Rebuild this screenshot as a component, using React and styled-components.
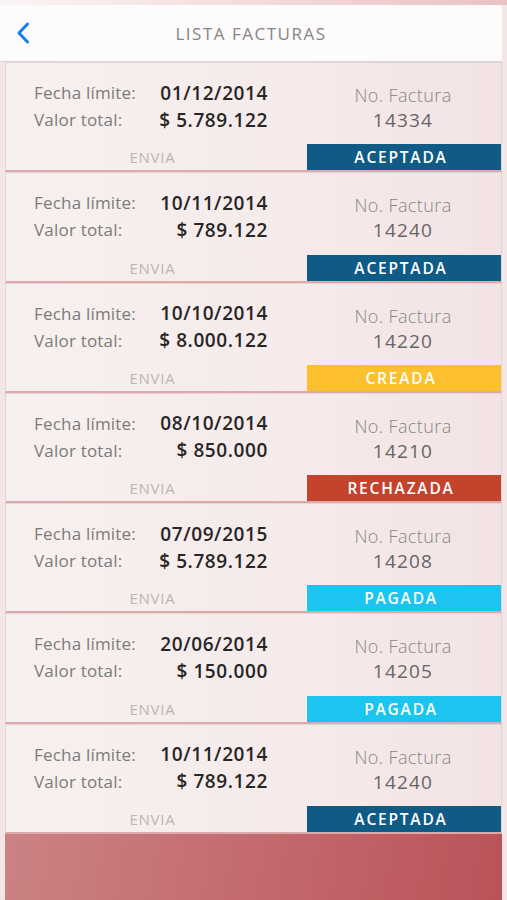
import React from 'react';
import styled, { createGlobalStyle } from 'styled-components';

const GlobalStyle = createGlobalStyle`
    html, body {
        margin: 0;
        padding: 0;
        background: #f4e6e6;
    }
    * {
        box-sizing: border-box;
    }
`;

const STATUS_COLORS = {
    ACEPTADA: '#0f5b86',
    CREADA: '#fcc02e',
    RECHAZADA: '#c3432d',
    PAGADA: '#1bc5f0',
};

const facturas = [
    { fecha: '01/12/2014', valor: '$ 5.789.122', numero: '14334', estado: 'ACEPTADA' },
    { fecha: '10/11/2014', valor: '$ 789.122', numero: '14240', estado: 'ACEPTADA' },
    { fecha: '10/10/2014', valor: '$ 8.000.122', numero: '14220', estado: 'CREADA' },
    { fecha: '08/10/2014', valor: '$ 850.000', numero: '14210', estado: 'RECHAZADA' },
    { fecha: '07/09/2015', valor: '$ 5.789.122', numero: '14208', estado: 'PAGADA' },
    { fecha: '20/06/2014', valor: '$ 150.000', numero: '14205', estado: 'PAGADA' },
    { fecha: '10/11/2014', valor: '$ 789.122', numero: '14240', estado: 'ACEPTADA' },
];

const Page = styled.div`
    width: 507px;
    height: 900px;
    overflow: hidden;
    display: flex;
    flex-direction: column;
    font-family: 'Open Sans', 'Liberation Sans', sans-serif;
    background: #f4e6e6;
`;

const TopStrip = styled.div`
    height: 5px;
    background: linear-gradient(90deg, #fbf5f5 0%, #f2d6d6 60%, #e9c2c3 100%);
`;

const Header = styled.header`
    width: 502px;
    height: 57px;
    background: #fdfbfb;
    border-bottom: 1px solid #d9d6d6;
    display: grid;
    grid-template-columns: 44px 1fr 44px;
    align-items: center;
`;

const BackButton = styled.button`
    border: 0;
    background: none;
    padding: 0 0 0 16px;
    display: flex;
    align-items: center;
    height: 100%;
    cursor: pointer;
`;

const Title = styled.h1`
    margin: 0;
    text-align: center;
    font-size: 17px;
    font-weight: 400;
    color: #858585;
    letter-spacing: 1.5px;
`;

const List = styled.div`
    flex: 1;
    margin-left: 5px;
    width: 497px;
    background: linear-gradient(100deg, #cf8f91 0%, #c77476 45%, #b9535a 100%);
    display: flex;
    flex-direction: column;
`;

const Card = styled.div`
    height: 110.3px;
    flex-shrink: 0;
    display: grid;
    grid-template-rows: 1fr 26px;
    background: linear-gradient(90deg, #f8f0f0 0%, #f6eaea 60%, #f3e3e4 100%);
    border: 1px solid #e6d3d4;
    border-bottom: 2px solid #dcaaac;
`;

const Info = styled.div`
    display: grid;
    grid-template-columns: 303px 1fr;
`;

const Details = styled.div`
    display: grid;
    grid-template-columns: auto 1fr;
    grid-auto-rows: 27px;
    align-items: center;
    padding: 16px 41px 0 28px;
`;

const Label = styled.span`
    font-size: 17px;
    color: #7b7b7b;
    font-weight: 400;
    letter-spacing: 0.2px;
`;

const Value = styled.span`
    text-align: right;
    font-size: 19px;
    font-weight: 600;
    color: #262626;
    letter-spacing: 0.6px;
`;

const Numero = styled.div`
    display: flex;
    flex-direction: column;
    align-items: center;
    padding-top: 20px;
    padding-right: 4px;
`;

const NumeroLabel = styled.span`
    font-size: 18px;
    line-height: 25px;
    font-weight: 300;
    color: #878787;
    letter-spacing: 0.4px;
`;

const NumeroValue = styled.span`
    font-size: 19px;
    line-height: 25px;
    font-weight: 400;
    color: #656565;
    letter-spacing: 1.2px;
`;

const Footer = styled.div`
    display: grid;
    grid-template-columns: 301px 1fr;
`;

const Envia = styled.span`
    display: flex;
    align-items: center;
    justify-content: center;
    padding-right: 8px;
    font-size: 15px;
    color: #bab6b6;
    letter-spacing: 0.8px;
`;

const Status = styled.span`
    display: flex;
    align-items: center;
    justify-content: center;
    padding-right: 6px;
    background: ${p => p.$color};
    color: #ffffff;
    font-size: 15.5px;
    font-weight: 600;
    letter-spacing: 1.8px;
`;

const Chevron = () => (
    <svg width="14" height="22" viewBox="0 0 14 22">
        <path d="M11.5 2 L3 11 L11.5 20" fill="none" stroke="#1b7cf2" strokeWidth="3" strokeLinecap="round" strokeLinejoin="round" />
    </svg>
);

const FacturaCard = ({ factura }) => (
    <Card>
        <Info>
            <Details>
                <Label>Fecha límite:</Label>
                <Value>{factura.fecha}</Value>
                <Label>Valor total:</Label>
                <Value>{factura.valor}</Value>
            </Details>
            <Numero>
                <NumeroLabel>No. Factura</NumeroLabel>
                <NumeroValue>{factura.numero}</NumeroValue>
            </Numero>
        </Info>
        <Footer>
            <Envia>ENVIA</Envia>
            <Status $color={STATUS_COLORS[factura.estado]}>{factura.estado}</Status>
        </Footer>
    </Card>
);

export default function App() {
    return (
        <>
            <GlobalStyle />
            <Page>
                <TopStrip />
                <Header>
                    <BackButton aria-label="Volver"><Chevron /></BackButton>
                    <Title>LISTA FACTURAS</Title>
                    <span />
                </Header>
                <List>
                    {facturas.map((f, i) => <FacturaCard key={i} factura={f} />)}
                </List>
            </Page>
        </>
    );
}
